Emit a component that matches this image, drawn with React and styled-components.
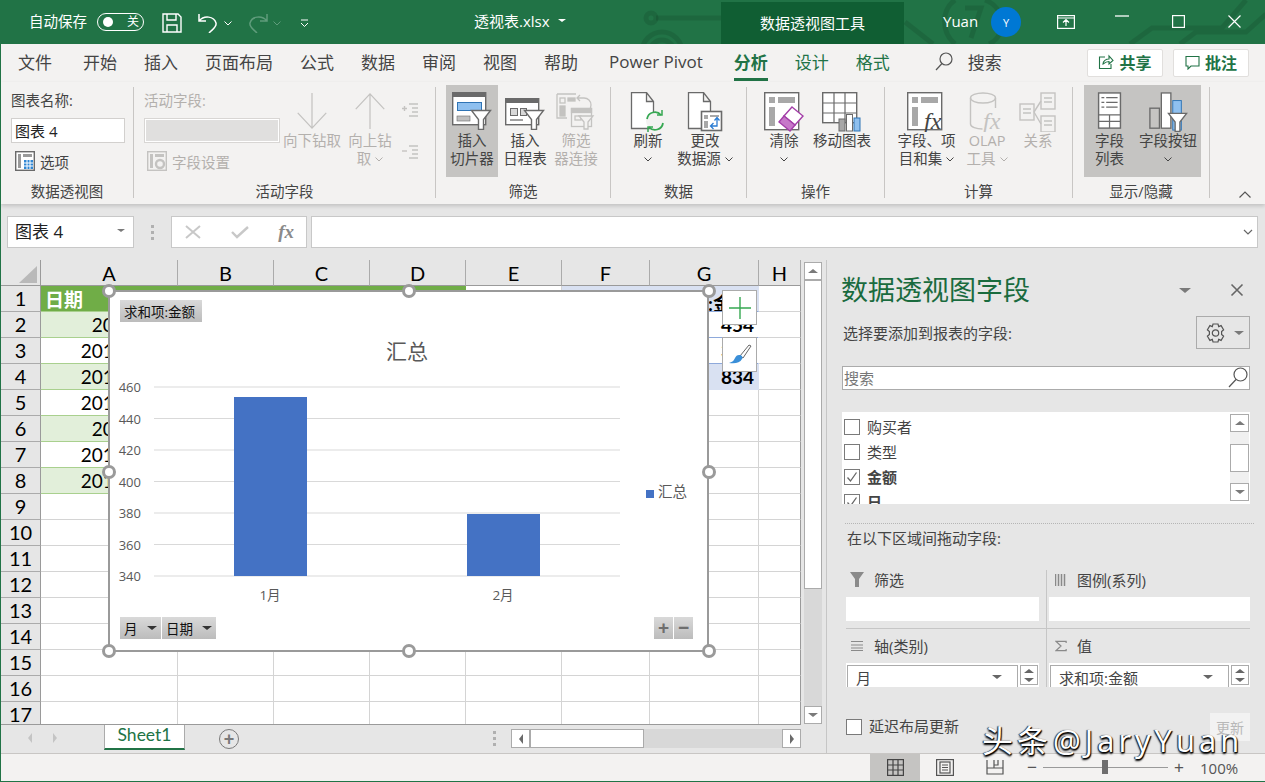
import React from 'react';
import styled, { createGlobalStyle } from 'styled-components';

const UI_FONT = '"Open Sans", "Noto Sans CJK SC", sans-serif';
const CELL_FONT = 'Lato, "Noto Sans CJK SC", sans-serif';
const GREEN = '#217346';
const TEXT = '#444444';
const OFF = '#b3b0ad';
const LINE = '#6a6a6a';
const LINE_OFF = '#c4c3c1';
const BLUE = '#8fc0ef';

const GlobalStyle = createGlobalStyle`
  * {
    box-sizing: border-box;
  }
  body {
    margin: 0;
    overflow: hidden;
    font-family: ${UI_FONT};
  }
`;

const Window = styled.div`
  position: relative;
  width: 1265px;
  height: 782px;
  overflow: hidden;
  display: flex;
  flex-direction: column;
  background: #e6e6e6;
  border-left: 1px solid ${GREEN};
  border-bottom: 1px solid ${GREEN};
`;

/* title bar */
const TitleBar = styled.header`
  position: relative;
  flex: none;
  height: 44px;
  display: flex;
  align-items: center;
  background: ${GREEN};
  color: #fff;
`;

const Circuit = styled.svg`
  position: absolute;
  left: 639px;
  top: 0;
  pointer-events: none;
`;

const QuickBar = styled.div`
  position: relative;
  width: 473px;
  display: flex;
  align-items: center;
  padding-left: 28px;
`;

const AutoSave = styled.span`
  width: 60px;
  padding-bottom: 3px;
  font-size: 14.5px;
  white-space: nowrap;
`;

const Toggle = styled.div`
  width: 47px;
  height: 18px;
  margin-left: 8px;
  padding: 0 4px;
  display: flex;
  align-items: center;
  justify-content: space-between;
  border: 1px solid #fff;
  border-radius: 9px;
  font-size: 12px;
  line-height: 1;
  &::before {
    content: '';
    width: 10px;
    height: 10px;
    margin-left: 1px;
    border-radius: 50%;
    background: #fff;
  }
`;

const QuickIcon = styled.span`
  display: flex;
  margin-top: 2px;
  margin-left: ${({ $gap }) => $gap}px;
`;

const FileName = styled.div`
  position: relative;
  width: 247px;
  padding-bottom: 3px;
  display: flex;
  align-items: center;
  gap: 8px;
  font-size: 15px;
`;

const ContextTab = styled.div`
  position: relative;
  align-self: flex-end;
  width: 183px;
  height: 42px;
  padding-bottom: 2px;
  display: flex;
  align-items: center;
  justify-content: center;
  background: #105e33;
  font-size: 15px;
`;

const UserName = styled.span`
  position: relative;
  margin-left: 39px;
  padding-bottom: 2px;
  font-size: 15px;
`;

const Avatar = styled.div`
  position: relative;
  width: 30px;
  height: 30px;
  margin-left: 13px;
  display: flex;
  align-items: center;
  justify-content: center;
  border-radius: 50%;
  background: #0078d4;
  font-size: 11px;
`;

const WinButtons = styled.div`
  position: relative;
  margin-left: 17px;
  display: flex;
`;

const WinButton = styled.span`
  width: 56px;
  display: flex;
  justify-content: center;
`;

/* tab strip */
const TabRow = styled.nav`
  flex: none;
  height: 38px;
  padding-left: 17px;
  display: flex;
  align-items: center;
  gap: 27px;
  background: #f3f2f1;
  color: ${TEXT};
  font-size: 17px;
`;

const Tab = styled.span`
  position: relative;
  margin: 0 ${({ $mx }) => $mx || 0}px;
  padding-bottom: 4px;
  color: ${({ $green }) => ($green ? GREEN : TEXT)};
  font-weight: ${({ $active }) => ($active ? 700 : 400)};
  white-space: nowrap;
  &::after {
    content: '';
    display: ${({ $active }) => ($active ? 'block' : 'none')};
    position: absolute;
    left: 0;
    right: 0;
    bottom: -3px;
    height: 3px;
    background: ${GREEN};
  }
`;

const FirstTab = styled(Tab)`
  margin-right: 4px;
`;

const SearchTab = styled.span`
  margin-left: 18px;
  padding-bottom: 4px;
  display: flex;
  align-items: center;
  gap: 15px;
`;

const ShareBox = styled.div`
  margin-left: auto;
  margin-right: 16px;
  display: flex;
  gap: 10px;
`;

const ShareButton = styled.button`
  width: 76px;
  height: 28px;
  padding: 0 0 2px;
  display: flex;
  align-items: center;
  justify-content: center;
  gap: 5px;
  border: 1px solid #e1dfdd;
  border-radius: 2px;
  background: #fff;
  color: ${GREEN};
  font: 700 16px ${UI_FONT};
`;

/* ribbon */
const Ribbon = styled.section`
  position: relative;
  z-index: 2;
  flex: none;
  height: 122px;
  padding: 5px 0 6px;
  display: flex;
  background: #f3f2f1;
  box-shadow: 0 2px 4px rgba(0, 0, 0, 0.16);
  color: ${TEXT};
  font-size: 14.5px;
`;

const Group = styled.div`
  width: ${({ $w }) => $w}px;
  display: flex;
  flex-direction: column;
  border-right: 1px solid #c8c6c4;
`;

const GroupBody = styled.div`
  height: 90px;
  padding-left: ${({ $pad }) => $pad}px;
  display: flex;
  gap: ${({ $gap }) => $gap || 0}px;
`;

const GroupLabel = styled.div`
  margin-top: auto;
  margin-bottom: -3px;
  text-align: center;
  line-height: 18px;
  white-space: nowrap;
`;

const BigButton = styled.div`
  width: ${({ $w }) => $w}px;
  height: 92px;
  margin-top: -2px;
  margin-left: ${({ $ml }) => $ml || 0}px;
  padding-top: 7px;
  display: flex;
  flex-direction: column;
  align-items: center;
  background: ${({ $active }) => ($active ? '#c5c4c2' : 'transparent')};
  color: ${({ $off }) => ($off ? OFF : TEXT)};
  line-height: 18px;
  text-align: center;
  white-space: nowrap;
`;

const BigIcon = styled.div`
  height: 40px;
  display: flex;
  align-items: flex-start;
  justify-content: center;
`;

const BigLine = styled.div`
  height: 18px;
  display: flex;
  align-items: center;
  justify-content: center;
  gap: 4px;
`;

const FieldColumn = styled.div`
  width: ${({ $w }) => $w}px;
  padding-top: 5px;
  flex: none;
  color: ${({ $off }) => ($off ? OFF : TEXT)};
`;

const FieldCaption = styled.div`
  height: 18px;
  line-height: 18px;
`;

const NameInput = styled.div`
  height: 25px;
  margin-top: 8px;
  padding-left: 3px;
  display: flex;
  align-items: center;
  border: 1px solid #d2d0ce;
  background: #fff;
  color: #222;
  font-size: 15px;
`;

const FieldInputOff = styled.div`
  height: 25px;
  margin-top: 8px;
  border: 2px solid #fff;
  outline: 1px solid #d8d6d4;
  outline-offset: -1px;
  background: #e0dfde;
`;

const LinkRow = styled.div`
  height: 20px;
  margin-top: 8px;
  margin-left: ${({ $ml }) => $ml}px;
  display: flex;
  align-items: center;
  gap: 5px;
`;

const SmallIcons = styled.div`
  margin-left: 8px;
  padding-top: 15px;
  display: flex;
  flex-direction: column;
  gap: 26px;
`;

const Collapse = styled.span`
  align-self: flex-end;
  margin-left: 29px;
  display: flex;
`;

/* formula bar */
const FormulaBar = styled.div`
  flex: none;
  height: 56px;
  padding: 12px 7px 12px 6px;
  display: flex;
  background: #e6e6e6;
`;

const NameBox = styled.div`
  width: 127px;
  padding: 0 8px 3px 7px;
  display: flex;
  align-items: center;
  justify-content: space-between;
  border: 1px solid #c8c8c8;
  background: #fff;
  color: #222;
  font-size: 17px;
`;

const Dots = styled.div`
  width: 37px;
  display: flex;
  flex-direction: column;
  align-items: center;
  justify-content: center;
  gap: 3px;
  span {
    width: 3px;
    height: 3px;
    background: #b0b0b0;
  }
`;

const FxBox = styled.div`
  width: 136px;
  padding: 0 12px 0 13px;
  display: flex;
  align-items: center;
  justify-content: space-between;
  border: 1px solid #c8c8c8;
  background: #fff;
`;

const FxText = styled.span`
  color: #8a8a8a;
  font: italic 700 19px 'Liberation Serif', serif;
`;

const FormulaInput = styled.div`
  flex: 1;
  margin-left: 4px;
  padding-right: 4px;
  display: flex;
  align-items: center;
  justify-content: flex-end;
  border: 1px solid #c8c8c8;
  background: #fff;
`;

/* work area */
const Work = styled.main`
  flex: none;
  height: 493px;
  display: flex;
`;

const SheetColumn = styled.div`
  flex: none;
  width: 825px;
  display: flex;
  flex-direction: column;
`;

const SheetRow = styled.div`
  height: 464px;
  display: flex;
`;

const SheetArea = styled.div`
  position: relative;
  width: 800px;
  height: 465px;
  overflow: hidden;
  border-bottom: 1px solid #9a9a9a;
`;

const Grid = styled.div`
  display: grid;
  grid-template-columns: 40px 137px repeat(4, 96px) 88px 109px 42px;
  grid-auto-rows: 26px;
  background: #fff;
  color: #000;
  font: 19px ${CELL_FONT};
`;

const Corner = styled.div`
  padding: 6px 0 0 18px;
  background: #e6e6e6;
  border-right: 1px solid #9a9a9a;
  border-bottom: 1px solid #9a9a9a;
  &::before {
    content: '';
    display: block;
    width: 18px;
    height: 17px;
    background: #b9b9b9;
    clip-path: polygon(100% 0, 100% 100%, 0 100%);
  }
`;

const ColHead = styled.div`
  display: flex;
  align-items: center;
  justify-content: center;
  background: #e6e6e6;
  border-right: 1px solid #ababab;
  border-bottom: 1px solid #9a9a9a;
  font-size: 20px;
`;

const RowHead = styled.div`
  padding-bottom: 1px;
  display: flex;
  align-items: center;
  justify-content: center;
  background: #e6e6e6;
  border-right: 1px solid #9a9a9a;
  border-bottom: 1px solid #ababab;
  font-size: 20px;
`;

const Cell = styled.div`
  overflow: hidden;
  padding: ${({ $pt }) => $pt || 0}px ${({ $pr }) => $pr ?? 4}px 0 4px;
  display: flex;
  align-items: center;
  justify-content: ${({ $right }) => ($right ? 'flex-end' : 'flex-start')};
  background: ${({ $bg }) => $bg || '#fff'};
  border-right: 1px solid ${({ $edge }) => $edge || '#d4d4d4'};
  border-bottom: 1px solid ${({ $under }) => $under || '#d4d4d4'};
  color: ${({ $color }) => $color || '#000'};
  font-weight: ${({ $bold }) => ($bold ? 700 : 400)};
  white-space: nowrap;
`;

const VScroll = styled.div`
  width: 18px;
  margin: 2px 0 0 3px;
  display: flex;
  flex-direction: column;
  justify-content: flex-start;
  background: #d8d8d8;
`;

const ScrollButton = styled.div`
  flex: none;
  width: ${({ $w }) => $w || 18}px;
  height: ${({ $h }) => $h || 18}px;
  display: flex;
  align-items: center;
  justify-content: center;
  background: #fff;
  border: 1px solid #ababab;
`;

const ScrollEnd = styled(ScrollButton)`
  margin-top: auto;
`;

const VThumb = styled.div`
  height: 309px;
  background: #fff;
  border: 1px solid #ababab;
`;

const Tri = styled.span`
  width: 0;
  height: 0;
  border-style: solid;
  border-color: transparent;
  border-width: ${({ $dir, $s }) =>
    $dir === 'up' || $dir === 'down' ? `${$s}px ${$s + 1}px` : `${$s + 1}px ${$s}px`};
  ${({ $dir, $c }) => `border-${{ up: 'bottom', down: 'top', left: 'right', right: 'left' }[$dir]}-color: ${$c};`}
  ${({ $dir, $s }) => `margin-${{ up: 'top', down: 'bottom', left: 'left', right: 'right' }[$dir]}: -${$s}px;`}
`;

/* chart */
const Chart = styled.div`
  position: absolute;
  left: 107px;
  top: 30px;
  width: 601px;
  height: 362px;
  background: #fff;
  box-shadow: inset 0 0 0 2px #9a9a9a;
`;

const ChartCanvas = styled.svg`
  display: block;
`;

const Handle = styled.span`
  position: absolute;
  left: ${({ $x }) => $x}px;
  top: ${({ $y }) => $y}px;
  width: 14px;
  height: 14px;
  transform: translate(-50%, -50%);
  border: 3px solid #9a9a9a;
  border-radius: 50%;
  background: #fff;
`;

const FieldButton = styled.div`
  height: 22px;
  width: ${({ $w }) => $w}px;
  padding: 0 4px;
  display: flex;
  align-items: center;
  justify-content: space-between;
  background: linear-gradient(#d9d9d9, #bcbcbc);
  color: #111;
  font-size: 13.5px;
  white-space: nowrap;
`;

const ValueButton = styled(FieldButton)`
  position: absolute;
  left: 12px;
  top: 10px;
`;

const AxisButtons = styled.div`
  position: absolute;
  left: 12px;
  top: 327px;
  display: flex;
  gap: 1px;
`;

const ZoomButtons = styled.div`
  position: absolute;
  right: 16px;
  top: 327px;
  display: flex;
  gap: 1px;
`;

const ZoomButton = styled(FieldButton)`
  justify-content: center;
  padding: 0;
  color: #6e6e6e;
  font: 700 19px 'Liberation Sans', sans-serif;
`;

const FloatButton = styled.div`
  position: absolute;
  left: 721px;
  top: ${({ $top }) => $top}px;
  width: 35px;
  height: 35px;
  display: flex;
  align-items: center;
  justify-content: center;
  background: #fff;
  border: 1px solid #ababab;
`;

/* sheet tabs */
const SheetBar = styled.div`
  height: 29px;
  display: flex;
  align-items: flex-start;
`;

const SheetNav = styled.div`
  width: 103px;
  height: 28px;
  padding-left: 27px;
  display: flex;
  align-items: center;
  gap: 21px;
`;

const SheetTab = styled.div`
  width: 81px;
  height: 26px;
  padding-bottom: 3px;
  display: flex;
  align-items: center;
  justify-content: center;
  background: #fff;
  border: 1px solid #ababab;
  border-top: 0;
  border-bottom: 2px solid ${GREEN};
  color: ${GREEN};
  font: 17.5px ${CELL_FONT};
`;

const AddSheet = styled.div`
  width: 20px;
  height: 20px;
  margin: 5px 0 0 34px;
  display: flex;
  align-items: center;
  justify-content: center;
  border: 1px solid #7a7a7a;
  border-radius: 50%;
  color: #7a7a7a;
  font: 700 18px/1 'Liberation Sans', sans-serif;
`;

const SplitDots = styled(Dots)`
  width: 16px;
  height: 28px;
  margin-left: 247px;
`;

const HScroll = styled.div`
  width: 290px;
  height: 19px;
  margin: 5px 0 0 9px;
  display: flex;
  background: #d8d8d8;
`;

const HThumb = styled.div`
  width: 114px;
  background: #fff;
  border: 1px solid #ababab;
  margin-right: auto;
`;

/* field list pane */
const Pane = styled.aside`
  flex: 1;
  height: 493px;
  padding: 12px 17px 12px 15px;
  display: flex;
  flex-direction: column;
  background: #e6e6e6;
  border-left: 1px solid #c6c6c6;
  color: ${TEXT};
  font-size: 15px;
`;

const PaneHead = styled.div`
  height: 36px;
  display: flex;
  align-items: center;
`;

const PaneTitle = styled.h2`
  margin: 0 0 0 -1px;
  color: #1a6b3e;
  font: 400 27px/36px ${UI_FONT};
`;

const PaneTools = styled.div`
  margin-left: auto;
  margin-right: 6px;
  display: flex;
  align-items: center;
  gap: 39px;
`;

const PaneCaption = styled.div`
  height: 33px;
  margin-top: 8px;
  padding-left: 1px;
  display: flex;
  align-items: center;
  justify-content: space-between;
`;

const GearButton = styled.div`
  width: 54px;
  height: 33px;
  padding-left: 2px;
  display: flex;
  align-items: center;
  justify-content: center;
  gap: 8px;
  border: 1px solid #ababab;
`;

const SearchBox = styled.div`
  height: 24px;
  margin-top: 17px;
  padding: 0 0 2px 1px;
  display: flex;
  align-items: center;
  justify-content: space-between;
  border: 1px solid #ababab;
  background: #fff;
  color: #777;
`;

const FieldList = styled.div`
  height: 92px;
  margin-top: 22px;
  display: flex;
  background: #fff;
  overflow: hidden;
`;

const FieldItems = styled.div`
  flex: 1;
  padding: 2px 0 0 2px;
`;

const FieldItem = styled.div`
  height: 25px;
  display: flex;
  align-items: center;
  gap: 7px;
  font-weight: ${({ $bold }) => ($bold ? 700 : 400)};
`;

const Check = styled.span`
  width: 16px;
  height: 16px;
  flex: none;
  display: flex;
  align-items: center;
  justify-content: center;
  background: #fff;
  border: 1px solid #7a7a7a;
`;

const ListScroll = styled.div`
  width: 19px;
  margin: 2px 1px 3px 0;
  display: flex;
  flex-direction: column;
  justify-content: space-between;
  background: #f0f0f0;
`;

const ListThumb = styled.div`
  height: 28px;
  background: #fff;
  border: 1px solid #ababab;
`;

const DottedLine = styled.div`
  margin: 19px -4px 0 3px;
  border-top: 1px dotted #b5b5b5;
`;

const DragCaption = styled.div`
  margin: 5px 0 0 5px;
  line-height: 18px;
`;

const Zones = styled.div`
  width: 404px;
  margin: 23px 0 0 4px;
  display: grid;
  grid-template-columns: 201px 203px;
`;

const Zone = styled.div`
  padding: ${({ $top }) => ($top ? '0 0 7px' : '7px 0 0')};
  padding-left: ${({ $right }) => ($right ? '2px' : '0')};
  padding-right: ${({ $right }) => ($right ? '0' : '7px')};
  border-right: ${({ $right }) => ($right ? '0' : '1px solid #c6c6c6')};
  border-bottom: ${({ $top }) => ($top ? '1px solid #c6c6c6' : '0')};
`;

const ZoneHead = styled.div`
  height: 22px;
  padding: 0 0 3px ${({ $pad }) => $pad}px;
  display: flex;
  align-items: center;
  gap: 10px;
`;

const ZoneBox = styled.div`
  height: 24px;
  margin-top: 5px;
  display: flex;
  background: #fff;
  overflow: hidden;
`;

const ZoneField = styled.div`
  flex: 1;
  height: 26px;
  margin: 2px 2px 0 1px;
  padding: 0 15px 0 8px;
  display: flex;
  align-items: flex-start;
  justify-content: space-between;
  border: 1px solid #ababab;
  line-height: 24px;
`;

const FieldCaret = styled.span`
  display: flex;
  margin-top: 9px;
`;

const Spinner = styled.div`
  width: 18px;
  margin: 2px 1px 2px 0;
  display: flex;
  flex-direction: column;
  align-items: center;
  justify-content: space-around;
  border: 1px solid #ababab;
`;

const PaneFooter = styled.div`
  margin-top: auto;
  margin-left: 4px;
  display: flex;
  align-items: center;
  gap: 7px;
`;

const FooterText = styled.span`
  padding-bottom: 3px;
`;

const UpdateButton = styled.div`
  width: 40px;
  height: 28px;
  margin-left: auto;
  display: flex;
  align-items: center;
  justify-content: center;
  background: #f2f2f2;
  color: #b8b8b8;
  font-size: 14px;
`;

/* status bar */
const StatusBar = styled.footer`
  flex: none;
  height: 28px;
  display: flex;
  justify-content: flex-end;
  align-items: center;
  background: #f3f2f1;
  border-top: 1px solid #c8c6c4;
  color: #555;
`;

const ViewButton = styled.div`
  width: 50px;
  height: 100%;
  display: flex;
  align-items: center;
  justify-content: center;
  background: ${({ $active }) => ($active ? '#c5c4c2' : 'transparent')};
`;

const Slider = styled.div`
  position: relative;
  width: 125px;
  height: 1px;
  margin: 0 3px;
  background: #9a9a9a;
  &::after {
    content: '';
    position: absolute;
    left: 59px;
    top: -7px;
    width: 6px;
    height: 14px;
    background: #6e6e6e;
  }
`;

const ZoomSign = styled.span`
  width: 16px;
  margin-left: ${({ $ml }) => $ml || 0}px;
  text-align: center;
  font: 17px 'Liberation Sans', sans-serif;
`;

const ZoomValue = styled.span`
  width: 78px;
  padding-left: 13px;
  font-size: 15px;
`;

const Watermark = styled.div`
  position: absolute;
  left: 981px;
  top: 718px;
  z-index: 5;
  color: #fff;
  font: 31px/44px ${UI_FONT};
  letter-spacing: 4px;
  word-spacing: -11px;
  white-space: nowrap;
  text-shadow: 1px 1px 1px #000, -1px 0 1px #222, 0 2px 2px #000;
`;

/* icons */
const Chev = ({ c = TEXT }) => (
  <svg width="8" height="5" viewBox="0 0 8 5">
    <path d="M.5.5 4 4 7.5.5" fill="none" stroke={c} />
  </svg>
);

const Funnel = ({ x, y, s = 1, c = LINE }) => (
  <path
    transform={`translate(${x} ${y}) scale(${s})`}
    d="M.5.5h19l-7 9v10h-5v-10z"
    fill="#fff"
    stroke={c}
    strokeWidth="1.4"
  />
);

const Page = ({ c = LINE }) => <path d="M1.5.5h15l7 9v27h-22z M16.5.5v9h7" fill="#fff" stroke={c} strokeWidth="1.3" />;

const SlicerIcon = () => (
  <svg width="40" height="38" viewBox="0 0 40 38">
    <rect x=".7" y=".7" width="33" height="32" fill="#fff" stroke={LINE} strokeWidth="1.4" />
    <rect x="1" y="1" width="33" height="4" fill={LINE} />
    <rect x="5.5" y="10.5" width="24" height="8" fill={BLUE} stroke="#2f74b5" />
    <rect x="5" y="24" width="13" height="5" fill="#c0c0c0" stroke={LINE} strokeWidth=".6" />
    <Funnel x={19} y={18} />
  </svg>
);

const TimelineIcon = () => (
  <svg width="40" height="38" viewBox="0 0 40 38">
    <rect x=".7" y="6.7" width="33" height="26" fill="#fff" stroke={LINE} strokeWidth="1.4" />
    <rect x="1" y="7" width="33" height="4" fill={LINE} />
    <rect x="5.5" y="16.5" width="7" height="7" fill="#d8d8d8" stroke={LINE} />
    <rect x="15.5" y="16.5" width="6" height="7" fill="#d8d8d8" stroke={LINE} />
    <rect x="5" y="27" width="13" height="2" fill="#a0a0a0" />
    <Funnel x={19} y={18} />
  </svg>
);

const FilterLinkIcon = () => (
  <svg width="40" height="38" viewBox="0 0 40 38" fill="none" stroke={LINE_OFF} strokeWidth="1.3">
    <path d="M1 2h19M1 2v24h10" />
    <rect x="4" y="6" width="5" height="5" />
    <rect x="12" y="6" width="7" height="3" fill={LINE_OFF} />
    <rect x="4" y="14" width="5" height="10" fill={LINE_OFF} />
    <path d="M24 3l-3 3 3 3M22 6h6c4 0 7 3 7 7 0 2-1 4-2 5" />
    <rect x="15.5" y="16.5" width="20" height="18" fill="#f3f2f1" />
    <rect x="15.5" y="16.5" width="20" height="4" fill={LINE_OFF} />
    <rect x="19" y="24" width="6" height="4" />
    <path d="M23 24h14l-5 6v7h-4v-7z" fill="#f3f2f1" />
  </svg>
);

const ArrowIcon = ({ up }) => (
  <svg width="34" height="38" viewBox="0 0 34 40" fill="none" stroke={LINE_OFF} strokeWidth="1.3">
    {up ? <path d="M17 39V2M2 18 17 2l15 16" /> : <path d="M17 1v37M2 22l15 16 15-16" />}
  </svg>
);

const LevelIcon = ({ plus }) => (
  <svg width="18" height="16" viewBox="0 0 18 16" fill="none" stroke={LINE_OFF} strokeWidth="1.4">
    <path d="M8 2h9M11 6h6M11 10h6M8 14h9" />
    <path d={plus ? 'M1 6.5h5M3.5 4v5' : 'M1 7h5'} />
  </svg>
);

const RefreshIcon = () => (
  <svg width="36" height="40" viewBox="0 0 36 40">
    <Page />
    <circle cx="25" cy="29" r="9" fill="#f3f2f1" />
    <path d="M17 27a8 8 0 0 1 14-4M33 31a8 8 0 0 1-14 4" fill="none" stroke="#36a852" strokeWidth="1.8" />
    <path d="M32 18v5h-5M18 40v-5h5" fill="none" stroke="#36a852" strokeWidth="1.5" />
  </svg>
);

const SourceIcon = () => (
  <svg width="36" height="40" viewBox="0 0 36 40">
    <Page />
    <rect x="14.5" y="19.5" width="20" height="19" fill="#fff" stroke={LINE} strokeWidth="1.6" />
    <rect x="17" y="23" width="4" height="4" fill="#a8a8a8" />
    <rect x="23" y="23" width="9" height="2" fill="#a8a8a8" />
    <rect x="17" y="29" width="4" height="7" fill="#a8a8a8" />
    <path d="M30 26v8h-6M26.5 31l-3 3 3 3M27.5 28.5l2.5-3 2.5 3" fill="none" stroke="#2b7cd3" strokeWidth="1.3" />
  </svg>
);

const ClearIcon = () => (
  <svg width="40" height="40" viewBox="0 0 40 40">
    <rect x=".7" y=".7" width="34" height="37" fill="#fff" stroke={LINE} strokeWidth="1.4" />
    <rect x="5" y="5" width="6" height="6" fill="#a8a8a8" />
    <rect x="14" y="5" width="17" height="6" fill="#a8a8a8" />
    <rect x="5" y="15" width="6" height="19" fill="#a8a8a8" />
    <path d="M28 15l11 9-8 9-11-9z" fill="#fff" stroke="#a33ea8" strokeWidth="1.4" />
    <path d="M20 24l11 9-5 6-11-9z" fill="#c678c9" stroke="#a33ea8" strokeWidth="1.4" />
  </svg>
);

const MoveChartIcon = () => (
  <svg width="40" height="40" viewBox="0 0 40 40">
    <rect x=".7" y=".7" width="34" height="30" fill="#fff" stroke={LINE} strokeWidth="1.4" />
    <path d="M12 1v30M23 1v30M1 11h34M1 21h34" stroke={LINE} strokeWidth="1.2" />
    <rect x="17" y="27" width="6" height="12" fill="#a8a8a8" stroke={LINE} />
    <rect x="24.5" y="22.5" width="6" height="16.5" fill="#fff" stroke={LINE} />
    <rect x="32" y="26" width="6" height="13" fill={BLUE} stroke="#2f74b5" />
  </svg>
);

const FieldsIcon = () => (
  <svg width="40" height="40" viewBox="0 0 40 40">
    <rect x=".7" y=".7" width="34" height="37" fill="#fff" stroke={LINE} strokeWidth="1.4" />
    <rect x="5" y="5" width="6" height="6" fill="#a8a8a8" />
    <rect x="14" y="5" width="17" height="6" fill="#a8a8a8" />
    <rect x="5" y="15" width="6" height="19" fill="#a8a8a8" />
    <text x="17" y="37" fontFamily="Liberation Serif" fontStyle="italic" fontSize="24" fill="#444">fx</text>
  </svg>
);

const OlapIcon = () => (
  <svg width="36" height="40" viewBox="0 0 36 40" fill="none" stroke={LINE_OFF} strokeWidth="1.4">
    <ellipse cx="14" cy="6" rx="12.5" ry="5" />
    <path d="M1.5 6v26c0 3 6 5 12 5M26.5 6v10" />
    <text x="14" y="37" stroke="none" fill={LINE_OFF} fontFamily="Liberation Serif" fontStyle="italic" fontSize="24">fx</text>
  </svg>
);

const RelationIcon = () => (
  <svg width="38" height="40" viewBox="0 0 38 40" fill="#f3f2f1" stroke={LINE_OFF} strokeWidth="1.4">
    <rect x="22" y="1" width="14" height="16" />
    <rect x="22" y="24" width="14" height="16" />
    <rect x="1" y="12" width="14" height="16" />
    <path d="M15 20l7-11M15 20l7 12M25 6h8M25 10h8M25 29h8M25 33h8M4 17h8M4 21h8" />
  </svg>
);

const FieldListIcon = () => (
  <svg width="26" height="38" viewBox="0 0 26 40" fill="none" stroke={LINE} strokeWidth="1.3">
    <rect x="1" y="1" width="23" height="37" fill="#fff" strokeWidth="1.5" />
    <path d="M1 24h23M1 31h23M12.5 24v14" />
    <path d="M4 6h3M9 6h12M4 11h3M9 11h12M4 16h3M9 16h12" />
  </svg>
);

const FieldButtonsIcon = () => (
  <svg width="42" height="40" viewBox="0 0 42 42">
    <rect x="2" y="17" width="10" height="21" fill="none" stroke={LINE} strokeWidth="1.4" />
    <rect x="14" y="1" width="10" height="37" fill="#fff" stroke={LINE} strokeWidth="1.4" />
    <rect x="26" y="9" width="9" height="31" fill={BLUE} stroke="#2f74b5" />
    <Funnel x={21} y={22} />
  </svg>
);

const CheckMark = () => (
  <svg width="12" height="12" viewBox="0 0 12 12">
    <path d="M1.5 6.5 4.5 10l6-8.5" fill="none" stroke="#666" strokeWidth="1.3" />
  </svg>
);

const GRID_LINES = [387, 418.5, 450, 481.5, 513, 544.5, 576];
const AXIS_VALUES = [460, 440, 420, 400, 380, 360, 340];
const HANDLES = [[1, 1], [301, 1], [601, 1], [1, 182], [601, 182], [1, 361], [301, 361], [601, 361]];

const columns = ['A', 'B', 'C', 'D', 'E', 'F', 'G', 'H'];
const dates = ['2019/1/5', '2019/1/15', '2019/1/25', '2019/2/15', '2019/2/5', '2019/2/15', '2019/2/25'];
const totals = { 2: '454', 3: '380', 4: '834' };

function cellProps(row, col) {
  if (row === 1 && col === 'A') {
    return { $bg: '#70ad47', $edge: '#70ad47', $under: '#a9d08e', $color: '#fff', $bold: true, children: '日期' };
  }
  if (row === 1 && ['B', 'C', 'D'].includes(col)) return { $bg: '#70ad47', $edge: '#70ad47', $under: '#a9d08e' };
  if (row === 1 && col === 'F') return { $bg: '#d9e1f2', $edge: '#d9e1f2', $under: '#8ea9db' };
  if (row === 1 && col === 'G') {
    return { $bg: '#d9e1f2', $edge: '#d9e1f2', $under: '#8ea9db', $right: true, $bold: true, $pr: 7, $pt: 7, children: '求和项:金额' };
  }
  if (col === 'A' && row <= 8) {
    return {
      $bg: row % 2 === 0 ? '#e2efda' : '#fff',
      $edge: row % 2 === 0 ? '#e2efda' : '#fff',
      $under: '#a9d08e',
      $right: true,
      $pr: 2,
      children: dates[row - 2],
    };
  }
  if (col === 'G' && totals[row]) {
    return {
      $bg: row === 4 ? '#d9e1f2' : '#fff',
      $under: row === 4 ? '#d9e1f2' : '#8ea9db',
      $edge: row === 4 ? '#d9e1f2' : '#fff',
      $right: true,
      $bold: true,
      children: totals[row],
    };
  }
  if (col === 'H') return { $edge: '#9a9a9a' };
  return {};
}

function Sheet() {
  const rows = Array.from({ length: 17 }, (_, i) => i + 1);
  return (
    <Grid>
      <Corner />
      {columns.map((col) => (
        <ColHead key={col}>{col}</ColHead>
      ))}
      {rows.map((row) => (
        <React.Fragment key={row}>
          <RowHead>{row}</RowHead>
          {columns.map((col) => (
            <Cell key={col} {...cellProps(row, col)} />
          ))}
        </React.Fragment>
      ))}
    </Grid>
  );
}

function PivotChart() {
  return (
    <Chart>
      <ChartCanvas width="601" height="362" viewBox="108 290 601 362" fontFamily={UI_FONT}>
        <text x="407" y="359" textAnchor="middle" fontSize="21" fill="#595959">汇总</text>
        {GRID_LINES.map((y, i) => (
          <g key={y}>
            <line x1="154" x2="620" y1={y} y2={y} stroke="#d9d9d9" />
            <text x="141" y={y + 5} textAnchor="end" fontSize="13" fill="#595959">{AXIS_VALUES[i]}</text>
          </g>
        ))}
        <rect x="234" y="397" width="73" height="179" fill="#4472c4" />
        <rect x="467" y="514" width="73" height="62" fill="#4472c4" />
        <text x="270" y="600" textAnchor="middle" fontSize="13.5" fill="#595959">1月</text>
        <text x="503" y="600" textAnchor="middle" fontSize="13.5" fill="#595959">2月</text>
        <rect x="646" y="490" width="8" height="8" fill="#4472c4" />
        <text x="658" y="497" fontSize="14.5" fill="#595959">汇总</text>
      </ChartCanvas>
      <ValueButton $w={82}>求和项:金额</ValueButton>
      <AxisButtons>
        <FieldButton $w={41}>月<Tri $dir="down" $s={4} $c="#333" /></FieldButton>
        <FieldButton $w={54}>日期<Tri $dir="down" $s={4} $c="#333" /></FieldButton>
      </AxisButtons>
      <ZoomButtons>
        <ZoomButton $w={19}>+</ZoomButton>
        <ZoomButton $w={19}>−</ZoomButton>
      </ZoomButtons>
      {HANDLES.map(([x, y]) => (
        <Handle key={`${x}-${y}`} $x={x} $y={y} />
      ))}
    </Chart>
  );
}

function FieldPane() {
  return (
    <Pane>
      <PaneHead>
        <PaneTitle>数据透视图字段</PaneTitle>
        <PaneTools>
          <Tri $dir="down" $s={5} $c="#7a7a7a" />
          <svg width="14" height="14" viewBox="0 0 14 14">
            <path d="M1.5 1.5l11 11M12.5 1.5l-11 11" stroke="#666" strokeWidth="1.6" />
          </svg>
        </PaneTools>
      </PaneHead>
      <PaneCaption>
        选择要添加到报表的字段:
        <GearButton>
          <svg width="21" height="20" viewBox="0 0 21 20" fill="none" stroke="#555" strokeWidth="1.2">
            <path d="M8 1h5l.7 2.6 2.4-1 2.5 4.2-2 1.8v2.8l2 1.8-2.5 4.2-2.4-1L13 19H8l-.7-2.6-2.4 1-2.5-4.2 2-1.8V8.6l-2-1.8 2.5-4.2 2.4 1z" />
            <circle cx="10.5" cy="10" r="3.2" />
          </svg>
          <Tri $dir="down" $s={4} $c="#7a7a7a" />
        </GearButton>
      </PaneCaption>
      <SearchBox>
        搜索
        <svg width="22" height="22" viewBox="0 0 22 22" fill="none" stroke="#555" strokeWidth="1.2">
          <circle cx="13.5" cy="8.5" r="6.5" />
          <path d="M9 13.5 2 21" />
        </svg>
      </SearchBox>
      <FieldList>
        <FieldItems>
          <FieldItem><Check />购买者</FieldItem>
          <FieldItem><Check />类型</FieldItem>
          <FieldItem $bold><Check><CheckMark /></Check>金额</FieldItem>
          <FieldItem $bold><Check><CheckMark /></Check>日</FieldItem>
        </FieldItems>
        <ListScroll>
          <ScrollButton $w={19}><Tri $dir="up" $s={4} $c="#7a7a7a" /></ScrollButton>
          <ListThumb />
          <ScrollButton $w={19}><Tri $dir="down" $s={4} $c="#7a7a7a" /></ScrollButton>
        </ListScroll>
      </FieldList>
      <DottedLine />
      <DragCaption>在以下区域间拖动字段:</DragCaption>
      <Zones>
        <Zone $top>
          <ZoneHead $pad={4}>
            <svg width="14" height="15" viewBox="0 0 14 15"><path d="M0 0h14L9 7v8H5V7z" fill="#8a8a8a" /></svg>
            筛选
          </ZoneHead>
          <ZoneBox />
        </Zone>
        <Zone $top $right>
          <ZoneHead $pad={6}>
            <svg width="12" height="12" viewBox="0 0 12 12"><path d="M.5 0v12M3.5 0v12M6.5 0v12M9.5 0v12" stroke="#8a8a8a" strokeWidth="1.5" /></svg>
            图例(系列)
          </ZoneHead>
          <ZoneBox />
        </Zone>
        <Zone>
          <ZoneHead $pad={4}>
            <svg width="14" height="12" viewBox="0 0 14 12"><path d="M1 1.5h12M1 5h12M1 8h12M1 10.5h12" stroke="#8a8a8a" strokeWidth="1.2" /></svg>
            轴(类别)
          </ZoneHead>
          <ZoneBox>
            <ZoneField>月<FieldCaret><Tri $dir="down" $s={4} $c="#666" /></FieldCaret></ZoneField>
            <Spinner>
              <Tri $dir="up" $s={4} $c="#666" />
              <Tri $dir="down" $s={4} $c="#666" />
            </Spinner>
          </ZoneBox>
        </Zone>
        <Zone $right>
          <ZoneHead $pad={6}>
            <svg width="12" height="12" viewBox="0 0 14 13"><path d="M13 3V1H1l6 5.5L1 12h12v-2" fill="none" stroke="#8a8a8a" strokeWidth="1.4" /></svg>
            值
          </ZoneHead>
          <ZoneBox>
            <ZoneField>求和项:金额<FieldCaret><Tri $dir="down" $s={4} $c="#666" /></FieldCaret></ZoneField>
            <Spinner>
              <Tri $dir="up" $s={4} $c="#666" />
              <Tri $dir="down" $s={4} $c="#666" />
            </Spinner>
          </ZoneBox>
        </Zone>
      </Zones>
      <PaneFooter>
        <Check />
        <FooterText>延迟布局更新</FooterText>
        <UpdateButton>更新</UpdateButton>
      </PaneFooter>
    </Pane>
  );
}

export default function App() {
  return (
    <>
      <GlobalStyle />
      <Window>
        <TitleBar>
          <Circuit width="626" height="44" viewBox="0 0 626 44" fill="none" stroke="#000" strokeOpacity="0.1" strokeWidth="5">
            <circle cx="11" cy="18" r="5" />
            <path d="M16 18h66" />
            <circle cx="22" cy="52" r="20" />
            <circle cx="22" cy="52" r="12" />
            <path d="M265 22l28 22M345 0c22 8 22 36 4 44M315 0c-14 10-14 32 0 44M325 8h16l-10 30" />
            <path d="M490 44l22-16h70l24-28M540 44l16-12h50l20-18" />
          </Circuit>
          <QuickBar>
            <AutoSave>自动保存</AutoSave>
            <Toggle>关</Toggle>
            <QuickIcon $gap={18}>
              <svg width="20" height="20" viewBox="0 0 20 20" fill="none" stroke="#fff" strokeWidth="1.4">
                <path d="M1 1h15l3 3v15H1zM5 1v6h9V1M5 19v-7h10v7" />
              </svg>
            </QuickIcon>
            <QuickIcon $gap={16}>
              <svg width="20" height="20" viewBox="0 0 20 20" fill="none" stroke="#fff" strokeWidth="1.5">
                <path d="M1 1v7h7M1 8c5-6 15-5 17 2 1 4-3 6-7 10" />
              </svg>
            </QuickIcon>
            <QuickIcon $gap={6}><Chev c="#fff" /></QuickIcon>
            <QuickIcon $gap={16}>
              <svg width="20" height="20" viewBox="0 0 20 20" fill="none" stroke="#5f9c7b" strokeWidth="1.5">
                <path d="M19 1v7h-7M19 8C14 2 4 3 2 10c-1 4 3 6 7 10" />
              </svg>
            </QuickIcon>
            <QuickIcon $gap={5}><Chev c="#5f9c7b" /></QuickIcon>
            <QuickIcon $gap={19}>
              <svg width="9" height="9" viewBox="0 0 9 9" fill="none" stroke="#fff">
                <path d="M1 1h7M1 4l3.5 3.5L8 4" />
              </svg>
            </QuickIcon>
          </QuickBar>
          <FileName>
            透视表.xlsx
            <Tri $dir="down" $s={3} $c="#fff" />
          </FileName>
          <ContextTab>数据透视图工具</ContextTab>
          <UserName>Yuan</UserName>
          <Avatar>Y</Avatar>
          <WinButtons>
            <WinButton>
              <svg width="18" height="14" viewBox="0 0 18 14" fill="none" stroke="#fff" strokeWidth="1.2">
                <rect x=".6" y=".6" width="16.8" height="12.8" />
                <path d="M1 3h16M9 11V5M6 7.5 9 4.5l3 3" />
              </svg>
            </WinButton>
            <WinButton>
              <svg width="14" height="2" viewBox="0 0 14 2"><path d="M0 1h14" stroke="#fff" strokeWidth="1.3" /></svg>
            </WinButton>
            <WinButton>
              <svg width="13" height="13" viewBox="0 0 13 13"><rect x=".6" y=".6" width="11.8" height="11.8" fill="none" stroke="#fff" strokeWidth="1.2" /></svg>
            </WinButton>
            <WinButton>
              <svg width="13" height="13" viewBox="0 0 13 13"><path d="M.5.5l12 12M12.5.5l-12 12" stroke="#fff" strokeWidth="1.2" /></svg>
            </WinButton>
          </WinButtons>
        </TitleBar>

        <TabRow>
          <FirstTab>文件</FirstTab>
          <Tab>开始</Tab>
          <Tab>插入</Tab>
          <Tab>页面布局</Tab>
          <Tab>公式</Tab>
          <Tab>数据</Tab>
          <Tab>审阅</Tab>
          <Tab>视图</Tab>
          <Tab>帮助</Tab>
          <Tab $mx={4}>Power Pivot</Tab>
          <Tab $green $active>分析</Tab>
          <Tab $green>设计</Tab>
          <Tab $green>格式</Tab>
          <SearchTab>
            <svg width="18" height="19" viewBox="0 0 18 19" fill="none" stroke="#555" strokeWidth="1.2">
              <circle cx="11" cy="7" r="6" />
              <path d="M7 11.5 1 18" />
            </svg>
            搜索
          </SearchTab>
          <ShareBox>
            <ShareButton>
              <svg width="16" height="16" viewBox="0 0 16 16" fill="none" stroke={GREEN} strokeWidth="1.1">
                <path d="M7 3H1.5v11.5H13V10M5 10c0-3 3-5 6-5V2l4 4.5L11 10V7.5c-2 0-4 1-6 2.5z" />
              </svg>
              共享
            </ShareButton>
            <ShareButton>
              <svg width="15" height="15" viewBox="0 0 15 15" fill="none" stroke={GREEN} strokeWidth="1.1">
                <path d="M1 1.5h13V11H6l-3 3v-3H1z" />
              </svg>
              批注
            </ShareButton>
          </ShareBox>
        </TabRow>

        <Ribbon>
          <Group $w={133}>
            <GroupBody $pad={10}>
              <FieldColumn $w={114}>
                <FieldCaption>图表名称:</FieldCaption>
                <NameInput>图表 4</NameInput>
                <LinkRow $ml={4}>
                  <svg width="20" height="20" viewBox="0 0 20 20">
                    <rect x=".7" y=".7" width="18.6" height="18.6" fill="#fff" stroke={LINE} strokeWidth="1.4" />
                    <rect x="3" y="3" width="3" height="14" fill="#9a9a9a" />
                    <rect x="8" y="3" width="9" height="3" fill="#9a9a9a" />
                    <rect x="9" y="9" width="9" height="9" fill="#2f86d4" />
                    <path d="M12 9v9M15 9v9M9 12h9M9 15h9" stroke="#fff" />
                  </svg>
                  选项
                </LinkRow>
              </FieldColumn>
            </GroupBody>
            <GroupLabel>数据透视图</GroupLabel>
          </Group>

          <Group $w={302}>
            <GroupBody $pad={10}>
              <FieldColumn $w={136} $off>
                <FieldCaption>活动字段:</FieldCaption>
                <FieldInputOff />
                <LinkRow $ml={3}>
                  <svg width="20" height="20" viewBox="0 0 20 20">
                    <rect x=".7" y=".7" width="18.6" height="18.6" fill="none" stroke={LINE_OFF} strokeWidth="1.4" />
                    <rect x="3" y="3" width="3" height="14" fill={LINE_OFF} />
                    <rect x="8" y="3" width="9" height="3" fill={LINE_OFF} />
                    <circle cx="13" cy="13" r="4" fill="none" stroke={LINE_OFF} strokeWidth="2.4" />
                  </svg>
                  字段设置
                </LinkRow>
              </FieldColumn>
              <BigButton $w={60} $ml={2} $off>
                <BigIcon><ArrowIcon /></BigIcon>
                <BigLine>向下钻取</BigLine>
              </BigButton>
              <BigButton $w={46} $ml={5} $off>
                <BigIcon><ArrowIcon up /></BigIcon>
                <BigLine>向上钻</BigLine>
                <BigLine>取 <Chev c={OFF} /></BigLine>
              </BigButton>
              <SmallIcons>
                <LevelIcon plus />
                <LevelIcon />
              </SmallIcons>
            </GroupBody>
            <GroupLabel>活动字段</GroupLabel>
          </Group>

          <Group $w={175}>
            <GroupBody $pad={10} $gap={3}>
              <BigButton $w={52} $active>
                <BigIcon><SlicerIcon /></BigIcon>
                <BigLine>插入</BigLine>
                <BigLine>切片器</BigLine>
              </BigButton>
              <BigButton $w={48}>
                <BigIcon><TimelineIcon /></BigIcon>
                <BigLine>插入</BigLine>
                <BigLine>日程表</BigLine>
              </BigButton>
              <BigButton $w={48} $off>
                <BigIcon><FilterLinkIcon /></BigIcon>
                <BigLine>筛选</BigLine>
                <BigLine>器连接</BigLine>
              </BigButton>
            </GroupBody>
            <GroupLabel>筛选</GroupLabel>
          </Group>

          <Group $w={136}>
            <GroupBody $pad={15} $gap={5}>
              <BigButton $w={44}>
                <BigIcon><RefreshIcon /></BigIcon>
                <BigLine>刷新</BigLine>
                <BigLine><Chev /></BigLine>
              </BigButton>
              <BigButton $w={60}>
                <BigIcon><SourceIcon /></BigIcon>
                <BigLine>更改</BigLine>
                <BigLine>数据源 <Chev /></BigLine>
              </BigButton>
            </GroupBody>
            <GroupLabel>数据</GroupLabel>
          </Group>

          <Group $w={138}>
            <GroupBody $pad={15} $gap={6}>
              <BigButton $w={44}>
                <BigIcon><ClearIcon /></BigIcon>
                <BigLine>清除</BigLine>
                <BigLine><Chev /></BigLine>
              </BigButton>
              <BigButton $w={60}>
                <BigIcon><MoveChartIcon /></BigIcon>
                <BigLine>移动图表</BigLine>
              </BigButton>
            </GroupBody>
            <GroupLabel>操作</GroupLabel>
          </Group>

          <Group $w={188}>
            <GroupBody $pad={11}>
              <BigButton $w={61}>
                <BigIcon><FieldsIcon /></BigIcon>
                <BigLine>字段、项</BigLine>
                <BigLine>目和集 <Chev /></BigLine>
              </BigButton>
              <BigButton $w={44} $ml={8} $off>
                <BigIcon><OlapIcon /></BigIcon>
                <BigLine>OLAP</BigLine>
                <BigLine>工具 <Chev c={OFF} /></BigLine>
              </BigButton>
              <BigButton $w={46} $ml={6} $off>
                <BigIcon><RelationIcon /></BigIcon>
                <BigLine>关系</BigLine>
              </BigButton>
            </GroupBody>
            <GroupLabel>计算</GroupLabel>
          </Group>

          <Group $w={137}>
            <GroupBody $pad={11}>
              <BigButton $w={51} $active>
                <BigIcon><FieldListIcon /></BigIcon>
                <BigLine>字段</BigLine>
                <BigLine>列表</BigLine>
              </BigButton>
              <BigButton $w={66} $active>
                <BigIcon><FieldButtonsIcon /></BigIcon>
                <BigLine>字段按钮</BigLine>
                <BigLine><Chev /></BigLine>
              </BigButton>
            </GroupBody>
            <GroupLabel>显示/隐藏</GroupLabel>
          </Group>

          <Collapse>
            <svg width="12" height="7" viewBox="0 0 12 7"><path d="M.5 6.5 6 1l5.5 5.5" fill="none" stroke="#555" strokeWidth="1.2" /></svg>
          </Collapse>
        </Ribbon>

        <FormulaBar>
          <NameBox>
            图表 4
            <Tri $dir="down" $s={3} $c="#7a7a7a" />
          </NameBox>
          <Dots><span /><span /><span /></Dots>
          <FxBox>
            <svg width="16" height="14" viewBox="0 0 16 14"><path d="M1 1l14 12M15 1 1 13" stroke="#c8c8c8" strokeWidth="2" /></svg>
            <svg width="18" height="14" viewBox="0 0 18 14"><path d="M1 7l5 5L17 2" fill="none" stroke="#c8c8c8" strokeWidth="2.4" /></svg>
            <FxText>fx</FxText>
          </FxBox>
          <FormulaInput>
            <svg width="10" height="6" viewBox="0 0 10 6"><path d="M1 1l4 4 4-4" fill="none" stroke="#666" strokeWidth="1.2" /></svg>
          </FormulaInput>
        </FormulaBar>

        <Work>
          <SheetColumn>
            <SheetRow>
              <SheetArea>
                <Sheet />
                <PivotChart />
                <FloatButton $top={30}>
                  <svg width="22" height="22" viewBox="0 0 22 22"><path d="M11 0v22M0 11h22" stroke="#36a852" strokeWidth="1.4" /></svg>
                </FloatButton>
                <FloatButton $top={77}>
                  <svg width="24" height="24" viewBox="0 0 24 24">
                    <path d="M12 13 21 2l2 1-8 12z" fill="#fff" stroke="#666" />
                    <path d="M11 12c3 0 4 2 3 4-2 4-7 5-13 4 4-1 5-3 6-5 1-2 2-3 4-3z" fill="#3a8fd8" />
                  </svg>
                </FloatButton>
              </SheetArea>
              <VScroll>
                <ScrollButton><Tri $dir="up" $s={4} $c="#7a7a7a" /></ScrollButton>
                <VThumb />
                <ScrollEnd><Tri $dir="down" $s={4} $c="#7a7a7a" /></ScrollEnd>
              </VScroll>
            </SheetRow>
            <SheetBar>
              <SheetNav>
                <Tri $dir="left" $s={4} $c="#c4c4c4" />
                <Tri $dir="right" $s={4} $c="#c4c4c4" />
              </SheetNav>
              <SheetTab>Sheet1</SheetTab>
              <AddSheet>+</AddSheet>
              <SplitDots><span /><span /><span /></SplitDots>
              <HScroll>
                <ScrollButton $w={19} $h={19}><Tri $dir="left" $s={4} $c="#6a6a6a" /></ScrollButton>
                <HThumb />
                <ScrollButton $w={19} $h={19}><Tri $dir="right" $s={4} $c="#6a6a6a" /></ScrollButton>
              </HScroll>
            </SheetBar>
          </SheetColumn>
          <FieldPane />
        </Work>

        <StatusBar>
          <ViewButton $active>
            <svg width="17" height="17" viewBox="0 0 17 17" fill="none" stroke="#444" strokeWidth="1.2">
              <rect x=".6" y=".6" width="15.8" height="15.8" />
              <path d="M6 1v15M11 1v15M1 6h15M1 11h15" />
            </svg>
          </ViewButton>
          <ViewButton>
            <svg width="18" height="17" viewBox="0 0 18 17" fill="none" stroke="#555" strokeWidth="1.2">
              <rect x=".6" y=".6" width="16.8" height="15.8" />
              <rect x="4" y="3" width="10" height="11" />
              <path d="M6 6h6M6 8.5h6M6 11h6" />
            </svg>
          </ViewButton>
          <ViewButton>
            <svg width="18" height="15" viewBox="0 0 18 15" fill="none" stroke="#555" strokeWidth="1.2">
              <path d="M1 0v14h16V0M1 8h16M8 0v8M12 0v5H8" />
            </svg>
          </ViewButton>
          <ZoomSign $ml={4}>−</ZoomSign>
          <Slider />
          <ZoomSign>+</ZoomSign>
          <ZoomValue>100%</ZoomValue>
        </StatusBar>

        <Watermark>头条 @JaryYuan</Watermark>
      </Window>
    </>
  );
}
